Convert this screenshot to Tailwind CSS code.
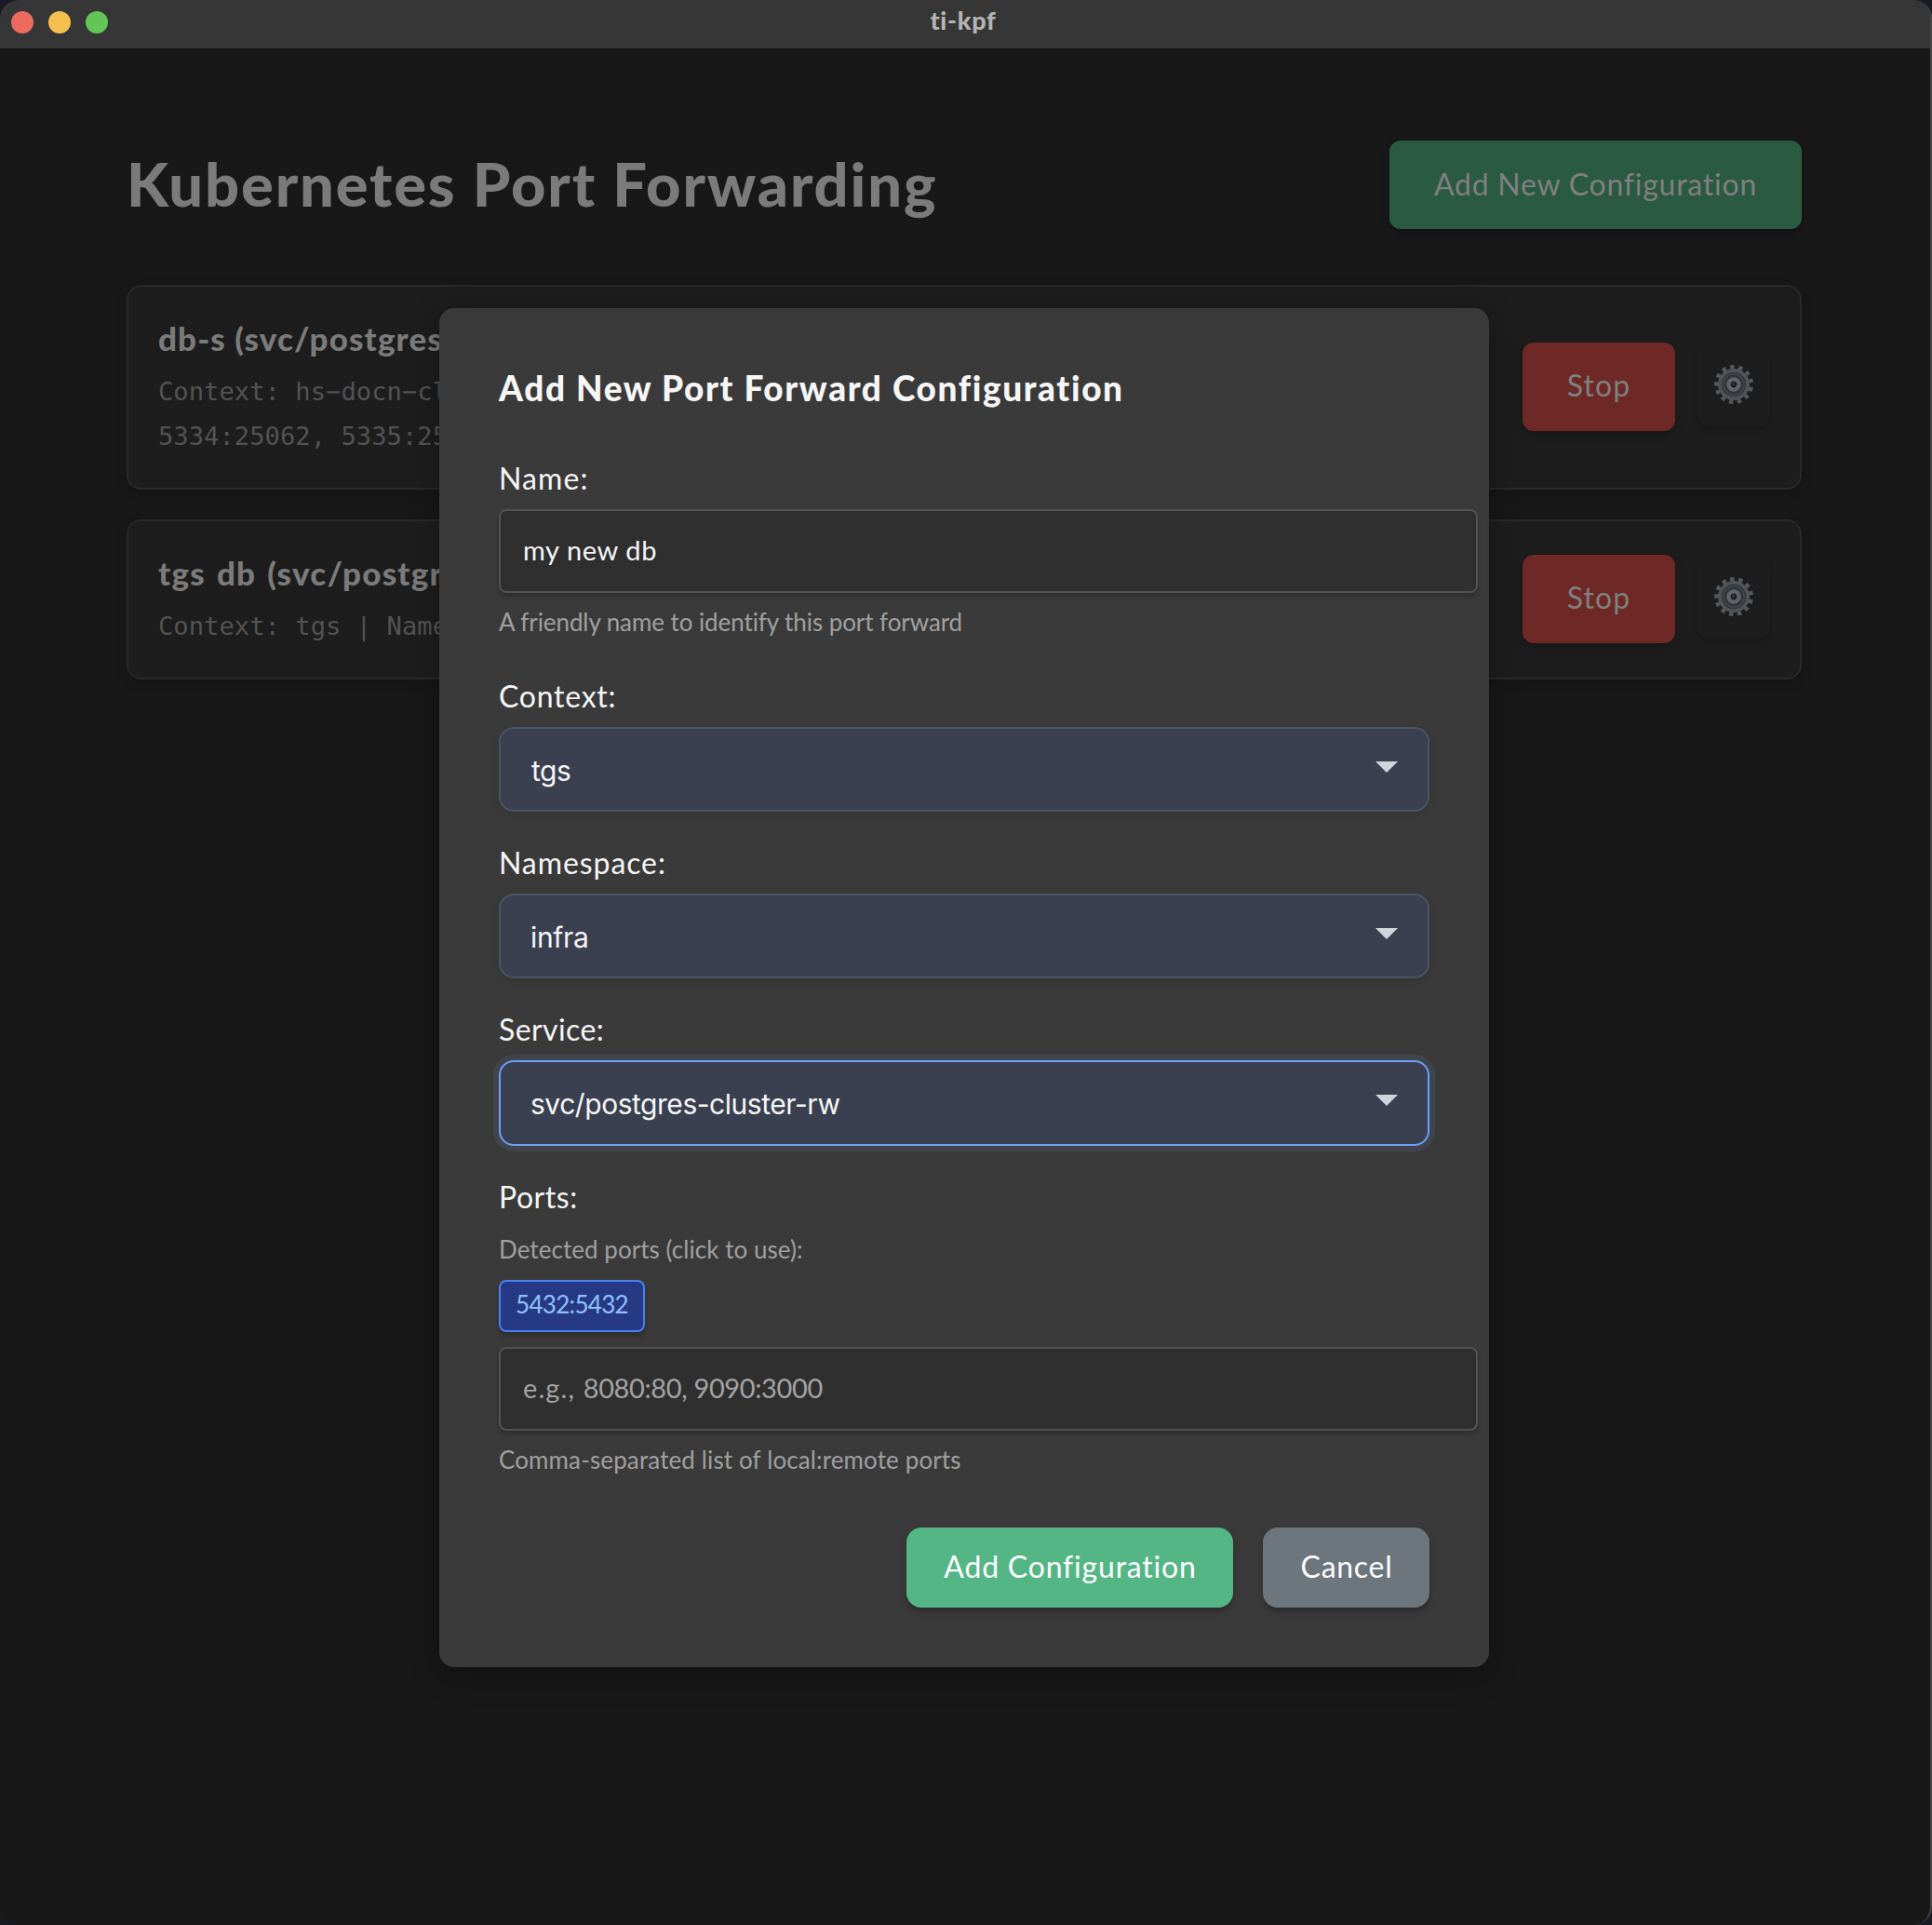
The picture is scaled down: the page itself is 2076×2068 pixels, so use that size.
<!DOCTYPE html>
<html lang="en">
<head>
<meta charset="utf-8">
<title>ti-kpf</title>
<script src="https://cdn.jsdelivr.net/npm/@tailwindcss/browser@4"></script>
</head>
<body class="bg-[#1a1b22] font-['Lato',sans-serif]">
<svg class="hidden">
  <symbol id="gear" viewBox="-22 -22 44 44">
    <circle r="18" fill="none" stroke="#55585c" stroke-width="6" pathLength="26" stroke-dasharray="0.95 1.05" transform="rotate(-18.5)"/>
    <circle r="15" fill="none" stroke="#505357" stroke-width="4"/>
    <circle r="13" fill="#34373a"/>
    <circle r="11.2" fill="none" stroke="#43464a" stroke-width="1.6"/>
    <circle r="9" fill="#303336"/>
    <circle r="5.6" fill="#1d1e20" stroke="#616468" stroke-width="4.4"/>
    <circle cx="-0.6" cy="-0.6" r="1.8" fill="#2d3034"/>
  </symbol>
  <symbol id="caret" viewBox="0 0 24 12"><path d="M0 0h24L12 12z" fill="#d1d5db"/></symbol>
</svg>

<div class="relative flex h-[2068px] w-[2076px] flex-col overflow-hidden rounded-[20px] border-r-2 border-[#454545] bg-[#181818]">
  <!-- Title bar -->
  <header class="grid h-[52px] grid-cols-3 bg-[#363636] px-3">
    <div class="flex h-12 items-center gap-4">
      <span class="size-6 rounded-full bg-[#ed6a5f]"></span>
      <span class="size-6 rounded-full bg-[#f5bf4f]"></span>
      <span class="size-6 rounded-full bg-[#62c555]"></span>
    </div>
    <div class="pr-1 text-center text-[27px] leading-[44px] font-black tracking-[0.7px] text-[#b4b4b4]">ti-kpf</div>
  </header>

  <!-- Page -->
  <main class="px-[136px] pt-[99px]">
    <div class="mb-[60px] flex h-[95px] w-[1800px] items-center justify-between">
      <h1 class="pb-1 text-[65px] leading-[96px] font-black tracking-[1.85px] text-[#7b7b7b]">Kubernetes Port Forwarding</h1>
      <button class="flex h-[95px] w-[443px] items-center justify-center rounded-xl bg-[#2b5a42] pb-0.5 text-[32px] tracking-[0.76px] text-[#808080] shadow-[0_4px_8px_rgba(0,0,0,0.2)]">Add New Configuration</button>
    </div>

    <div class="flex w-[1800px] flex-col gap-8">
      <section class="flex h-[220px] items-center justify-between rounded-2xl border-2 border-[#292929] bg-[#1d1d1d] px-8 shadow-[0_4px_12px_rgba(0,0,0,0.15)]">
        <div class="h-full pt-[31px]">
          <h3 class="mb-2.5 text-[35px] leading-[48px] font-black tracking-[1.1px] text-[#7b7b7b]">db-s (svc/postgres</h3>
          <p class="font-['DejaVu_Sans_Mono',monospace] text-[27.2px] leading-[48px] text-[#535353]">Context: hs−docn−cl<br>5334:25062, 5335:25</p>
        </div>
        <div class="flex items-start gap-6 pb-0.5">
          <button class="flex h-[95px] w-[164px] items-center justify-center rounded-xl bg-[#6e2926] pb-0.5 text-[32px] tracking-[1.1px] text-[#808080] shadow-[0_4px_8px_rgba(0,0,0,0.2)]">Stop</button>
          <button class="flex h-[90px] w-[78px] items-center justify-center rounded-xl bg-[#1d1d1d] shadow-[0_4px_4px_rgba(0,0,0,0.18)]"><svg class="size-[44px]"><use href="#gear"/></svg></button>
        </div>
      </section>

      <section class="flex h-[172px] items-center justify-between rounded-2xl border-2 border-[#292929] bg-[#1d1d1d] px-8 shadow-[0_4px_12px_rgba(0,0,0,0.15)]">
        <div class="h-full pt-[31px]">
          <h3 class="mb-2.5 text-[35px] leading-[48px] font-black tracking-[1.2px] [word-spacing:2.5px] text-[#7b7b7b]">tgs db (svc/postgr</h3>
          <p class="font-['DejaVu_Sans_Mono',monospace] text-[27.2px] leading-[48px] text-[#535353]">Context: tgs | Name</p>
        </div>
        <div class="flex items-start gap-6 pb-0.5">
          <button class="flex h-[95px] w-[164px] items-center justify-center rounded-xl bg-[#6e2926] pb-0.5 text-[32px] tracking-[1.1px] text-[#808080] shadow-[0_4px_8px_rgba(0,0,0,0.2)]">Stop</button>
          <button class="flex h-[90px] w-[78px] items-center justify-center rounded-xl bg-[#1d1d1d] shadow-[0_4px_4px_rgba(0,0,0,0.18)]"><svg class="size-[44px]"><use href="#gear"/></svg></button>
        </div>
      </section>
    </div>
  </main>

  <!-- Modal -->
  <div class="absolute top-[331px] left-[472px] flex h-[1460px] w-[1128px] flex-col rounded-2xl bg-[#3a3a3a] px-16 pt-[62px] text-[#f6f6f6] shadow-[0_8px_32px_rgba(0,0,0,0.3)]">
    <h2 class="mb-[52px] text-[37px] leading-[48px] font-black tracking-[1.6px] whitespace-nowrap">Add New Port Forward Configuration</h2>

    <label class="mb-3 text-[32px] leading-[42px] tracking-[1.1px]">Name:</label>
    <div class="mb-3 flex h-[90px] w-[1052px] items-center rounded-lg border-2 border-[#525252] bg-[#2f2f2f] px-6 pb-[3px] text-[29px] tracking-[0.6px] shadow-[0_4px_4px_rgba(0,0,0,0.2)]">my new db</div>
    <p class="mb-10 text-[26px] leading-[38px] tracking-[-0.08px] text-[#a0a0a0]">A friendly name to identify this port forward</p>

    <label class="mb-3 text-[32px] leading-[42px] tracking-[0.75px]">Context:</label>
    <div class="mb-[34px] flex h-[91px] items-center justify-between rounded-2xl border-2 border-[#4b5563] bg-[#3a4050] px-8 font-['Inter',sans-serif] text-[30px] tracking-[-0.4px] shadow-[0_2px_6px_rgba(0,0,0,0.12)]"><span class="pt-[3px] pl-px">tgs</span><svg class="mb-1.5 h-3 w-6"><use href="#caret"/></svg></div>

    <label class="mb-3 text-[32px] leading-[42px] tracking-[0.92px]">Namespace:</label>
    <div class="mb-[34px] flex h-[91px] items-center justify-between rounded-2xl border-2 border-[#4b5563] bg-[#3a4050] px-8 font-['Inter',sans-serif] text-[30px] tracking-[-0.35px] shadow-[0_2px_6px_rgba(0,0,0,0.12)]"><span class="pt-[3px]">infra</span><svg class="mb-1.5 h-3 w-6"><use href="#caret"/></svg></div>

    <label class="mb-3 text-[32px] leading-[42px] tracking-[0.4px]">Service:</label>
    <div class="mb-[34px] flex h-[92px] items-center justify-between rounded-2xl border-2 border-[#6ca0f6] bg-[#3a4050] px-8 font-['Inter',sans-serif] text-[30px] tracking-[-0.46px] shadow-[0_0_0_6px_#40454d]"><span class="pt-[3px]">svc/postgres-cluster-rw</span><svg class="mb-1.5 h-3 w-6"><use href="#caret"/></svg></div>

    <label class="mb-4 text-[32px] leading-[42px] tracking-[0.55px]">Ports:</label>
    <p class="mb-3.5 text-[26px] leading-[38px] tracking-[0.05px] text-[#a0a0a0]">Detected ports (click to use):</p>
    <button class="mb-4 flex h-14 w-[157px] items-center justify-center rounded-lg border-2 border-[#4a80ee] bg-[#253985] pb-[3px] text-[26px] tracking-[-0.7px] text-[#93c1fb] shadow-[0_4px_4px_rgba(0,0,0,0.2)]">5432:5432</button>
    <div class="mb-3 flex h-[90px] w-[1052px] items-center rounded-lg border-2 border-[#525252] bg-[#2f2f2f] px-6 pb-[3px] text-[29px] text-[#a3a3a3] shadow-[0_4px_4px_rgba(0,0,0,0.2)]"><span class="tracking-[-0.38px] whitespace-pre"><span class="tracking-[1.1px]">e.g., </span>8080:80, 9090:3000</span></div>
    <p class="mb-[54px] text-[26px] leading-[38px] tracking-[0.12px] text-[#a0a0a0]">Comma-separated list of local:remote ports</p>

    <div class="flex justify-end gap-8 text-white">
      <button class="flex h-[86px] w-[351px] items-center justify-center rounded-2xl bg-[#55b685] pb-0.5 pl-px text-[32px] tracking-[0.8px] shadow-[0_4px_6px_rgba(0,0,0,0.25)]">Add Configuration</button>
      <button class="flex h-[86px] w-[179px] items-center justify-center rounded-2xl bg-[#6d757d] pb-0.5 pl-px text-[32px] tracking-[0.7px] shadow-[0_4px_6px_rgba(0,0,0,0.25)]">Cancel</button>
    </div>
  </div>
</div>
</body>
</html>
